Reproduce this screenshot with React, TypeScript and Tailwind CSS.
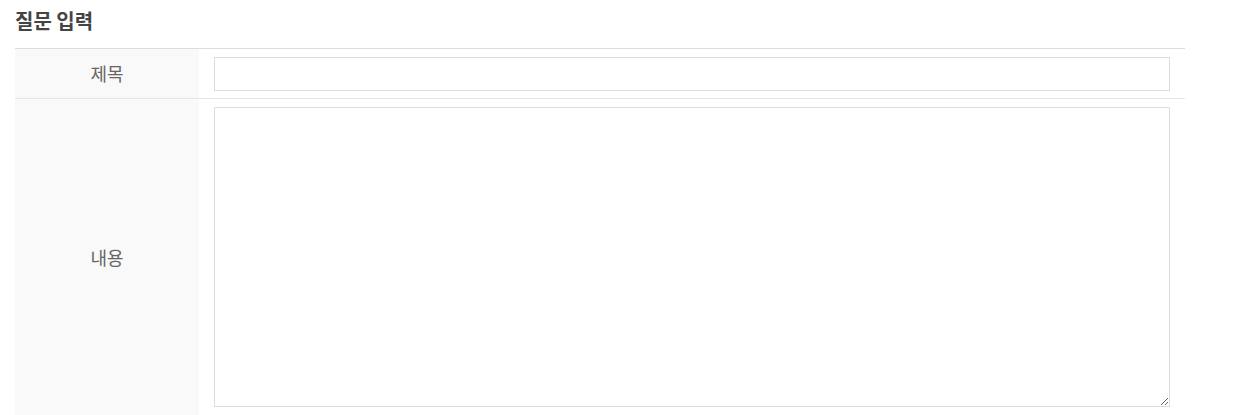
export default function App() {
  return (
    <div className="bg-white" style={{ fontFamily: '"Noto Sans CJK KR", "Noto Sans", sans-serif' }}>
      <div className="ml-[15px] w-[1170px]">
        <h3 className="h-[48px] pt-[8px] text-[20px] font-bold leading-[26px] text-[#444]">질문 입력</h3>
        <table className="w-full border-collapse border-t border-[#dddddd]">
          <tbody>
            <tr className="border-b border-[#e5e5e5]">
              <th className="w-[184px] bg-[#f9f9f9] text-center align-middle text-[18px] font-normal text-[#666]">제목</th>
              <td className="px-[15px] pt-[8px] pb-[7px]">
                <input type="text" className="block h-[34px] w-full border border-[#dddddd] bg-white px-2 outline-none" />
              </td>
            </tr>
            <tr>
              <th className="w-[184px] bg-[#f9f9f9] text-center align-middle text-[18px] font-normal text-[#666]">내용</th>
              <td className="px-[15px] py-[8px]">
                <textarea className="block h-[300px] w-full border border-[#dddddd] bg-white px-2 outline-none" />
              </td>
            </tr>
          </tbody>
        </table>
      </div>
    </div>
  );
}
